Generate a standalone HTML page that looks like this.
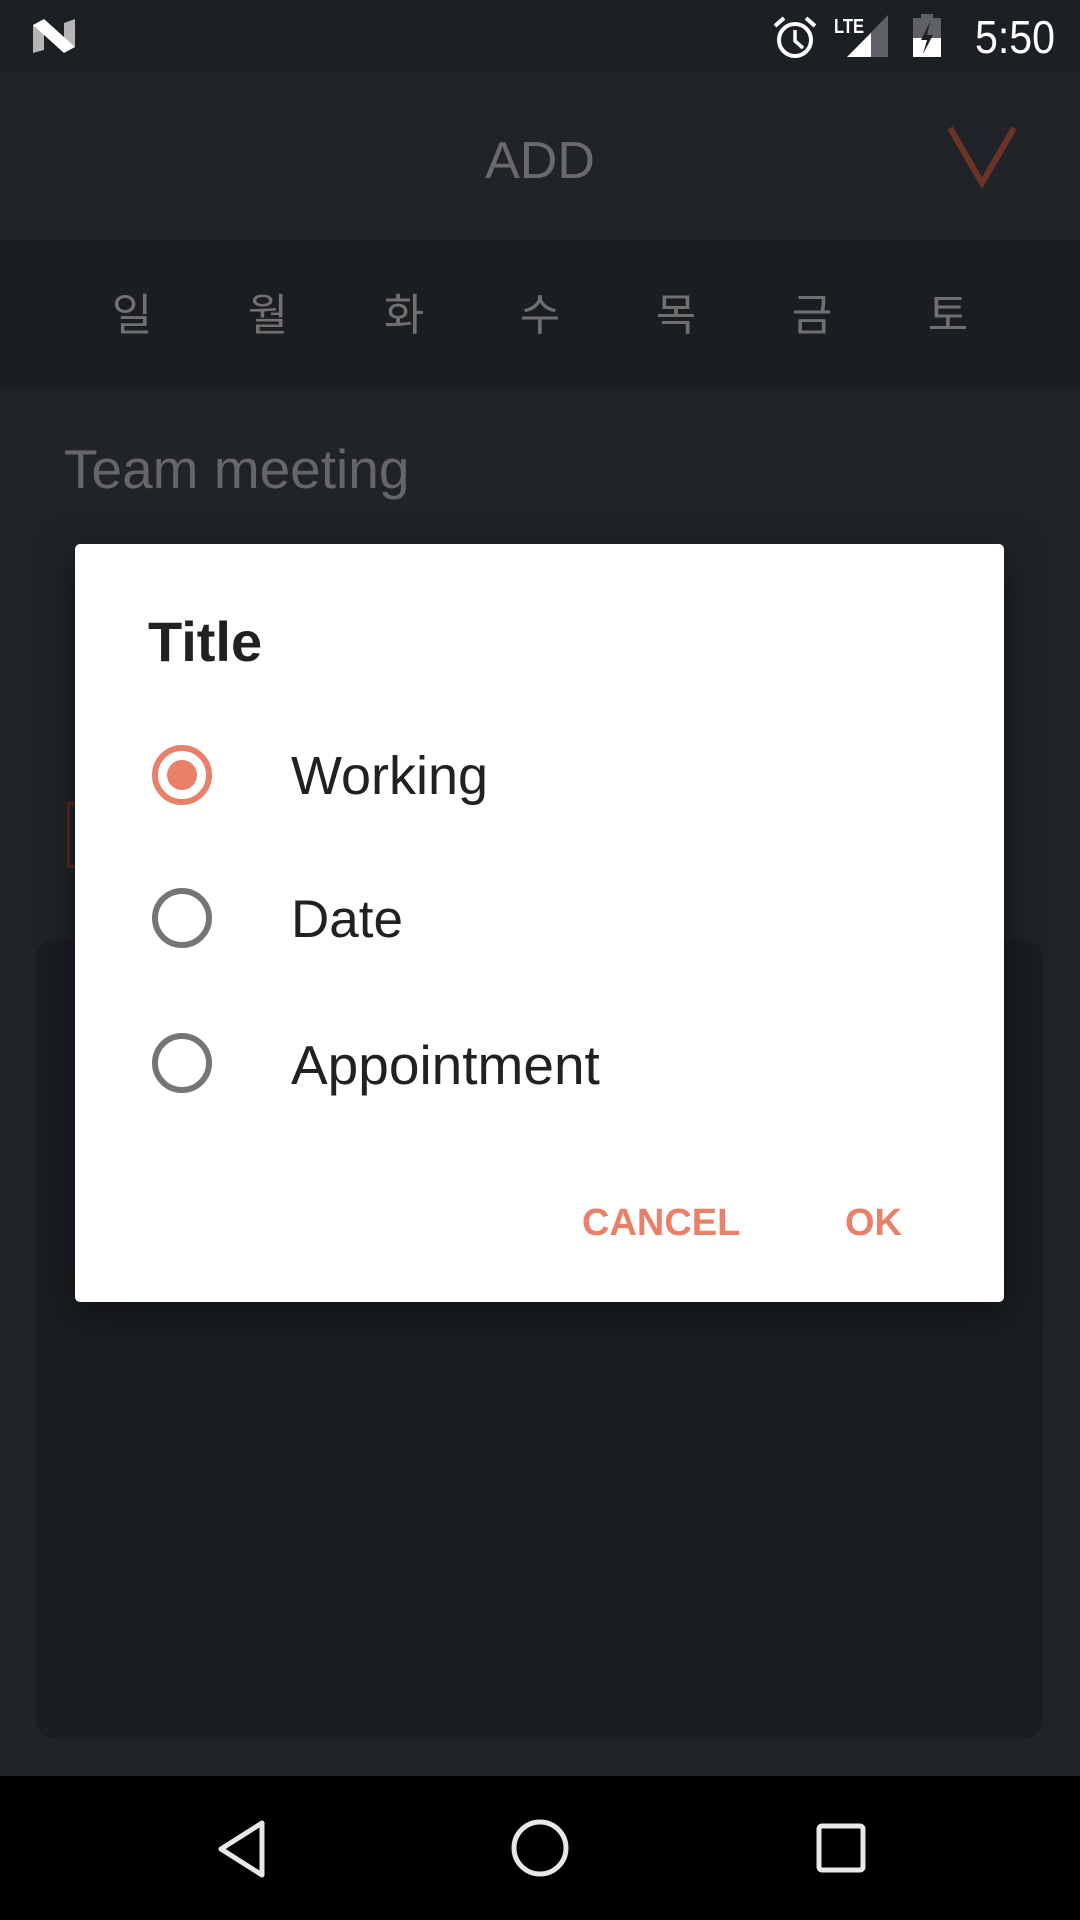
<!DOCTYPE html>
<html><head><meta charset="utf-8"><style>
*{margin:0;padding:0;box-sizing:border-box}
body{width:1080px;height:1920px;background:#202428;position:relative;overflow:hidden;font-family:"Liberation Sans","Noto Sans CJK KR",sans-serif}
.abs{position:absolute}
</style></head><body>
<div class="abs" style="left:0;top:0;width:1080px;height:72px;background:#1c1f23"></div>
<svg class="abs" style="left:0;top:0" width="1080" height="72">
<polygon points="33,25 44,21 44,50 33,53" fill="#b5b5b5"/>
<polygon points="64,23 75,19 75,47 64,51" fill="#b5b5b5"/>
<polygon points="33,25 44,19 75,47 64,53" fill="#fff"/>
<circle cx="795" cy="40" r="16" fill="none" stroke="#fff" stroke-width="4"/>
<path d="M795 30 V41 L803 48" fill="none" stroke="#fff" stroke-width="3.5"/>
<path d="M775 26 L784 18 M815 26 L806 18" stroke="#fff" stroke-width="4"/>
<text x="834" y="33" fill="#fff" font-size="20" font-weight="bold" textLength="30" lengthAdjust="spacingAndGlyphs">LTE</text>
<polygon points="847,57 888,57 888,15" fill="#606166"/>
<polygon points="847,57 871,57 871,33" fill="#fff"/>
<rect x="913" y="18" width="28" height="39" fill="#606166"/>
<rect x="921" y="14" width="12" height="5" fill="#606166"/>
<rect x="913" y="38" width="28" height="19" fill="#fff"/>
<path d="M930 22 L921 40 L927 40 L923 54 L933 35 L927 35 Z" fill="#1c1f23"/>
<text x="975" y="53" fill="#fff" font-size="46" textLength="80" lengthAdjust="spacingAndGlyphs">5:50</text>
</svg>
<div class="abs" style="left:0;top:72px;width:1080px;height:168px;background:#202428"></div>
<div class="abs" style="left:0;top:136px;width:1080px;text-align:center;color:#6a6a6a;font-size:52px;line-height:50px">ADD</div>
<svg class="abs" style="left:945px;top:120px" width="80" height="70"><path d="M5 8 L37 63 L69 8" fill="none" stroke="#6b3426" stroke-width="6"/></svg>
<div class="abs" style="left:0;top:240px;width:1080px;height:151px;background:#1b1e21"></div>
<div class="abs" style="left:64px;top:290px;width:952px;display:flex;justify-content:space-between;color:#707070;font-size:44px;line-height:52px">
<span style="width:136px;text-align:center">일</span><span style="width:136px;text-align:center">월</span><span style="width:136px;text-align:center">화</span><span style="width:136px;text-align:center">수</span><span style="width:136px;text-align:center">목</span><span style="width:136px;text-align:center">금</span><span style="width:136px;text-align:center">토</span></div>
<div class="abs" style="left:64px;top:438px;color:#666;font-size:55px;line-height:62px">Team meeting</div>
<div class="abs" style="left:36px;top:940px;width:1007px;height:799px;background:#1b1e21;border-radius:18px"></div>
<div class="abs" style="left:67px;top:802px;width:12px;height:66px;border:3px solid #5a2b20;border-right:none"></div>
<div class="abs" style="left:0;top:1776px;width:1080px;height:144px;background:#000"></div>
<svg class="abs" style="left:0;top:1776px" width="1080" height="144">
<path d="M262 47 L262 99 L221 73 Z" fill="none" stroke="#e8e8e8" stroke-width="5" stroke-linejoin="round"/>
<circle cx="540" cy="72" r="26" fill="none" stroke="#e8e8e8" stroke-width="5"/>
<rect x="819" y="50" width="44" height="44" rx="3" fill="none" stroke="#e8e8e8" stroke-width="5"/>
</svg>
<div class="abs" style="left:75px;top:544px;width:929px;height:758px;background:#fff;border-radius:5px;box-shadow:0 10px 40px rgba(0,0,0,.5)"></div>
<div class="abs" style="left:148px;top:612px;color:#212121;font-size:56px;font-weight:bold;line-height:60px">Title</div>
<svg class="abs" style="left:140px;top:730px" width="90" height="380">
<circle cx="42" cy="45" r="27" fill="none" stroke="#e8806a" stroke-width="6"/>
<circle cx="42" cy="45" r="15" fill="#e8806a"/>
<circle cx="42" cy="188" r="27" fill="none" stroke="#757575" stroke-width="6"/>
<circle cx="42" cy="333" r="27" fill="none" stroke="#757575" stroke-width="6"/>
</svg>
<div class="abs" style="left:291px;top:745px;color:#212121;font-size:54px;line-height:62px">Working</div>
<div class="abs" style="left:291px;top:889px;color:#212121;font-size:53px;line-height:62px">Date</div>
<div class="abs" style="left:291px;top:1034px;color:#212121;font-size:55px;line-height:62px">Appointment</div>
<div class="abs" style="left:582px;top:1201px;color:#e8806a;font-size:38px;font-weight:bold;line-height:44px">CANCEL</div>
<div class="abs" style="left:845px;top:1201px;color:#e8806a;font-size:38px;font-weight:bold;line-height:44px">OK</div>
</body></html>
